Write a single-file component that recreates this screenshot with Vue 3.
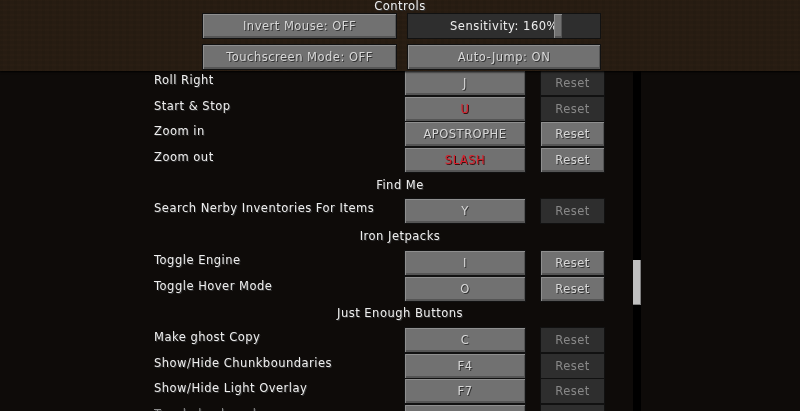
<template>
  <div class="screen">
    <header class="top">
      <div class="title">Controls</div>
      <div class="options">
        <button class="mc-btn">Invert Mouse: OFF</button>
        <div class="slider">
          <span>Sensitivity: 160%</span>
          <i class="knob"></i>
        </div>
        <button class="mc-btn">Touchscreen Mode: OFF</button>
        <button class="mc-btn">Auto-Jump: ON</button>
      </div>
    </header>

    <main class="list">
      <div class="rows">
        <template v-for="row in rows" :key="row.id">
          <div v-if="row.heading" class="heading">{{ row.heading }}</div>
          <div v-else class="row">
            <span class="label" :class="{ faded: row.faded }">{{ row.label }}</span>
            <button class="mc-btn key" :class="{ conflict: row.conflict }">{{ row.key }}</button>
            <button class="mc-btn reset" :class="{ off: !row.changed }">Reset</button>
          </div>
        </template>
      </div>
      <div class="scrollbar"><i class="thumb"></i></div>
    </main>
  </div>
</template>

<script setup>
const rows = [
  { id: 1, label: 'Roll Right', key: 'J' },
  { id: 2, label: 'Start & Stop', key: 'U', conflict: true },
  { id: 3, label: 'Zoom in', key: 'APOSTROPHE', changed: true },
  { id: 4, label: 'Zoom out', key: 'SLASH', conflict: true, changed: true },
  { id: 5, heading: 'Find Me' },
  { id: 6, label: 'Search Nerby Inventories For Items', key: 'Y' },
  { id: 7, heading: 'Iron Jetpacks' },
  { id: 8, label: 'Toggle Engine', key: 'I', changed: true },
  { id: 9, label: 'Toggle Hover Mode', key: 'O', changed: true },
  { id: 10, heading: 'Just Enough Buttons' },
  { id: 11, label: 'Make ghost Copy', key: 'C' },
  { id: 12, label: 'Show/Hide Chunkboundaries', key: 'F4' },
  { id: 13, label: 'Show/Hide Light Overlay', key: 'F7' },
  { id: 14, label: 'Toggle bookmark', key: 'B', faded: true },
]
</script>

<style>
html, body {
  margin: 0;
  background: #0d0a08;
}
</style>

<style scoped>
.screen {
  width: 800px;
  height: 411px;
  overflow: hidden;
  display: flex;
  flex-direction: column;
  font-family: "DejaVu Sans", sans-serif;
  font-size: 11.5px;
  letter-spacing: 0.5px;
  color: #eeeeee;
  text-shadow: 1px 1px 0 #333;
  filter: blur(0.3px);
  background-color: #0e0b09;
}
.top {
  position: relative;
  z-index: 1;
  height: 71px;
  flex: none;
  background-color: #271c12;
  background-image:
    repeating-linear-gradient(90deg, rgba(0, 0, 0, 0.05) 0 3px, transparent 3px 7px),
    repeating-linear-gradient(0deg, rgba(90, 60, 35, 0.05) 0 2px, transparent 2px 5px);
  box-shadow: 0 1px 2px #000;
}
.title {
  text-align: center;
  height: 13px;
  line-height: 13px;
}
.options {
  display: grid;
  grid-template-columns: 195px 194px;
  grid-auto-rows: 26px;
  column-gap: 10px;
  row-gap: 5px;
  justify-content: center;
  margin-left: 3px;
}
.mc-btn {
  font: inherit;
  letter-spacing: inherit;
  color: #d8d8d8;
  text-shadow: 1px 1px 0 #333;
  padding: 0;
  border: 1px solid #111;
  background: #717171;
  box-shadow: inset 1px 1px 0 #8f8f8f, inset -1px -2px 0 #555;
}
.slider {
  position: relative;
  display: flex;
  align-items: center;
  justify-content: center;
  background: #2e2e2e;
  border: 1px solid #111;
}
.knob {
  position: absolute;
  left: 146px;
  top: 0;
  bottom: 0;
  width: 8px;
  background: #717171;
  box-shadow: inset 1px 1px 0 #8f8f8f, inset -1px -2px 0 #555;
}
.list {
  flex: 1;
  min-height: 0;
  margin-top: -2px;
  display: flex;
  padding-left: 154px;
  overflow: hidden;
}
.rows {
  width: 450px;
  flex: none;
}
.heading,
.row {
  height: 25.7px;
}
.heading {
  line-height: 27px;
  text-align: center;
  padding-left: 42px;
  width: 450px;
  box-sizing: border-box;
}
.row {
  display: grid;
  grid-template-columns: 250px 122px 65px;
  align-items: start;
}
.label {
  margin-top: 4px;
}
.label.faded {
  color: #8a8a8a;
}
.key,
.reset {
  height: 26px;
  margin-top: 1px;
}
.reset {
  width: 65px;
  margin-left: 14px;
}
.reset.off {
  background: #2e2e2e;
  box-shadow: none;
  color: #888;
}
.conflict {
  color: #d8202c;
  text-shadow: 1px 1px 0 #3a1010;
}
.scrollbar {
  width: 8px;
  margin-left: 29px;
  background: #000;
  height: 342px;
  padding-top: 191px;
  box-sizing: border-box;
}
.thumb {
  display: block;
  height: 45px;
  background: #c0c0c0;
  box-shadow: inset -1px -1px 0 #808080;
}
</style>
